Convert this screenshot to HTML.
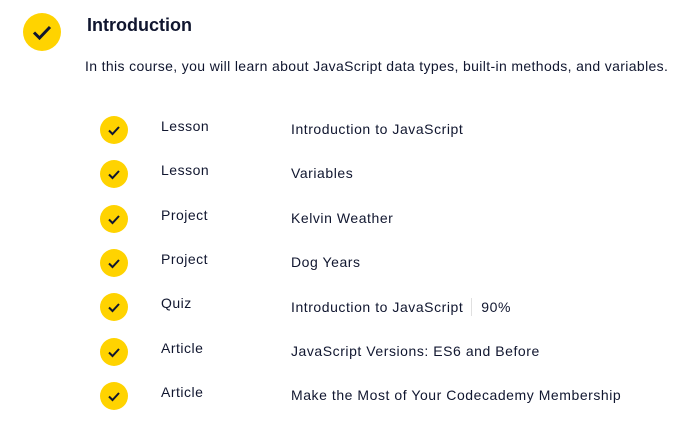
<!DOCTYPE html><html><head><style>
body{margin:0;width:678px;height:432px;background:#fff;font-family:"Liberation Sans",sans-serif;color:#10162f;position:relative;overflow:hidden}
.a{position:absolute;white-space:nowrap}
.c{position:absolute;border-radius:50%;background:#ffd300}
.c svg{position:absolute;left:0;top:0}
</style></head><body>
<div class="c" style="left:23px;top:13px;width:38px;height:38px"><svg width="38" height="38"><path d="M11 19.5l5.5 5.5L27 14" fill="none" stroke="#10162f" stroke-width="3"/></svg></div>
<div class="a" style="left:87px;top:15px;font-size:18px;font-weight:bold">Introduction</div>
<div class="a" style="left:85px;top:58px;font-size:14px;letter-spacing:0.36px">In this course, you will learn about JavaScript data types, built-in methods, and variables.</div>
<div id="r"></div>
<script>
var d=[["Lesson","Introduction to JavaScript"],["Lesson","Variables"],["Project","Kelvin Weather"],["Project","Dog Years"],["Quiz","Introduction to JavaScript"],["Article","JavaScript Versions: ES6 and Before"],["Article","Make the Most of Your Codecademy Membership"]];
var h="";d.forEach(function(x,i){var y=130+i*44.3;
h+='<div class="c" style="left:100px;top:'+(y-14)+'px;width:28px;height:28px"><svg width="28" height="28"><path d="M9 14.5l3.5 3.5L19 11" fill="none" stroke="#10162f" stroke-width="2"/></svg></div>';
h+='<div class="a" style="left:161px;top:'+(y-12)+'px;font-size:14px;letter-spacing:0.5px">'+x[0]+'</div>';
h+='<div class="a" style="left:291px;top:'+(y-9)+'px;font-size:14px;letter-spacing:0.55px">'+x[1]+(i==4?'<span style="display:inline-block;width:1px;height:18px;background:#e0e0e0;margin:0 9px -4px 8px"></span>90%':'')+'</div>';});
document.getElementById("r").innerHTML=h;
</script>
</body></html>
